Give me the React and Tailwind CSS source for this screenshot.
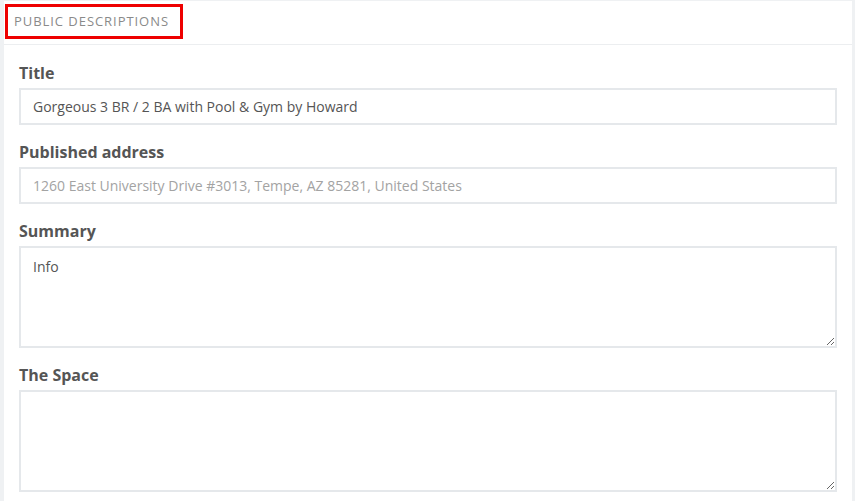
const font = { fontFamily: '"Open Sans", sans-serif' };

function Field({ label, children }) {
  return (
    <div className="flex flex-col">
      <label className="text-[16px] font-bold text-[#555] leading-[20px] mb-[5px]">{label}</label>
      {children}
    </div>
  );
}

export default function App() {
  return (
    <div className="min-h-screen bg-[#eff1f3] pt-px pl-1 pr-[3px]" style={font}>
      <div className="bg-white min-h-[500px]">
        {/* header */}
        <div className="h-[44px] border-b border-[#eceef0] pt-[3px] pl-px">
          <div className="w-[178px] h-[35px] border-[3px] border-[#ee0000] flex items-center pl-[6px] pt-px">
            <span className="text-[13px] text-[#8a8a8a] tracking-[0.95px] uppercase">
              Public Descriptions
            </span>
          </div>
        </div>

        <div className="px-[15px] pt-[18px] flex flex-col gap-[17px]">
          <Field label="Title">
            <input
              defaultValue="Gorgeous 3 BR / 2 BA with Pool & Gym by Howard"
              className="h-[37px] border-2 border-[#e5e8eb] px-[12px] text-[14px] text-[#555] outline-none"
            />
          </Field>
          <Field label="Published address">
            <input
              placeholder="1260 East University Drive #3013, Tempe, AZ 85281, United States"
              className="h-[37px] border-2 border-[#e5e8eb] px-[12px] text-[14px] text-[#555] placeholder:text-[#a3a3a3] outline-none"
            />
          </Field>
          <Field label="Summary">
            <textarea
              defaultValue="Info"
              className="h-[102px] border-2 border-[#e5e8eb] px-[12px] py-[8px] text-[14px] text-[#555] outline-none"
            />
          </Field>
          <Field label="The Space">
            <textarea className="h-[102px] border-2 border-[#e5e8eb] px-[12px] py-[8px] text-[14px] text-[#555] outline-none" />
          </Field>
        </div>
      </div>
    </div>
  );
}
